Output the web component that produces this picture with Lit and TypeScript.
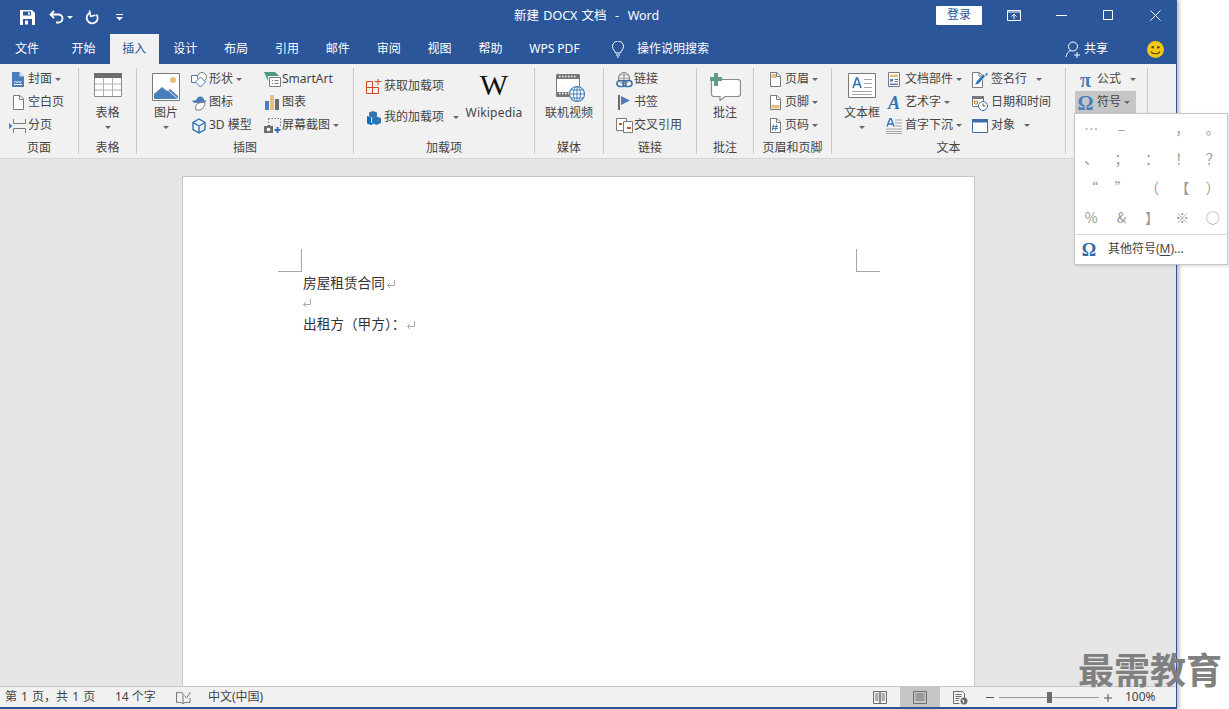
import {LitElement, css, html, svg, nothing} from 'lit';
import {customElement} from 'lit/decorators.js';

const BLUE = '#4a7ebb';
const GRAY = '#7a7a7a';
const TAN = '#e8bd7d';

const ico = (w: number, h: number, body: unknown) =>
  html`<svg width=${w} height=${h} viewBox="0 0 ${w} ${h}" fill="none">${body}</svg>`;

const page = svg`<path d="M1.500 .5h6.500l3.500 3.500v10.500h-10z" fill="#fff" stroke="${GRAY}"/><path d="M7.500 .5v4h4" stroke="${GRAY}"/>`;

const ICONS: Record<string, unknown> = {
  cover: ico(12, 15, svg`<path d="M0 0h7.500l4.500 4.500V15H0z" fill="${BLUE}"/><path d="M7.500 0v4.500H12z" fill="#cfdcec"/><path d="M2 10.500l1.500-1 1.500 1 1.500-1 1.500 1 1.500-1M2 12.500h8" stroke="#fff"/>`),
  blank: ico(12, 15, page),
  pagebreak: ico(18, 14, svg`<path d="M4.500 0v4.500h12V0M4.500 14V9.500h12V14" stroke="${GRAY}"/><path d="M0 4l3.500 3L0 10z" fill="${BLUE}"/>`),
  shapes: ico(17, 16, svg`<path d="M.5 3.500h8v7h-8z" fill="#fff" stroke="${BLUE}"/><circle cx="11" cy="5" r="4.500" fill="#fff" stroke="${GRAY}"/><path d="M9.500 5l5 5-5 5-5-5z" fill="#fff" stroke="${BLUE}"/>`),
  icons: ico(17, 16, svg`<path d="M1 6c2-1 3-1 4-.5C6 2 8 1 10 1.500c2 .5 3 2 3 3.500l3 1-3 1c-2 0-4 1-6 1C5 8 2 8 1 6z" fill="${BLUE}"/><path d="M5 15c-1-3 0-6 3-7l6-1c0 4-2 7-5 8z" fill="#fff" stroke="${GRAY}"/>`),
  cube: ico(14, 16, svg`<path d="M7 1l6 3.500v7L7 15l-6-3.500v-7zM1 4.500L7 8l6-3.500M7 8v7" stroke="#2e75b6" stroke-width="1.400"/>`),
  smartart: ico(17, 15, svg`<path d="M0 0h11l4 4H4v5z" fill="#4f9a82"/><path d="M5.500 5.500h11v9h-11z" fill="#fff" stroke="${GRAY}"/><path d="M8 8.500h1M8 11.500h1M10.500 8.500h4M10.500 11.500h4" stroke="${GRAY}"/>`),
  chart: ico(14, 15, svg`<path d="M0 6h4v9H0z" fill="${BLUE}"/><path d="M5 0h4v15H5z" fill="${TAN}"/><path d="M10 4h4v11h-4z" fill="#6d6d6d"/>`),
  shot: ico(17, 15, svg`<path d="M4.500 .5h12v8" stroke="${GRAY}" stroke-dasharray="1.500 1.500"/><path d="M4.500 .5v5" stroke="${GRAY}" stroke-dasharray="1.500 1.500"/><path d="M0 8h3l1-1h2l1 1h2v7H0z" fill="#6d6d6d"/><circle cx="4.500" cy="11.500" r="1.800" fill="#fff"/><path d="M13.500 9v6M10.500 12h6" stroke="#2e75b6" stroke-width="2"/>`),
  getaddin: ico(16, 16, svg`<path d="M.5 2.500h6v6h-6zM.5 8.500h6v6h-6zM6.500 8.500h6v6h-6z" stroke="#d24726"/><path d="M8.500 2.500h7M12 0v6" stroke="#d24726"/>`),
  myaddin: ico(15, 15, svg`<path d="M6 1l4 1.500v4L6 8 2 6.500v-4z" fill="#2e75b6"/><path d="M0 6l4 1.500v5L7 14l-3 1-4-1.500z" fill="#0f6cbd"/><path d="M5 8l4.500-1.500L14 8v5l-4.500 2L5 13z" fill="#2e75b6"/>`),
  film: ico(29, 30, svg`<path d="M.5 1.500h23v22H.5z" fill="#fff" stroke="${GRAY}"/><path d="M1 2h22v4H1zM1 19h22v4H1z" fill="#777"/><path d="M3 3.500h1.500M6 3.500h1.500M9 3.500h1.500M12 3.500h1.500M15 3.500h1.500M18 3.500h1.500M3 20.500h1.500M6 20.500h1.500M9 20.500h1.500M12 20.500h1.500" stroke="#fff" stroke-width="1.500"/><circle cx="21" cy="21" r="7.500" fill="#fff" stroke="${BLUE}" stroke-width="1.200"/><path d="M13.500 21h15M21 13.500v15M15 17h12M15 25h12" stroke="${BLUE}"/><ellipse cx="21" cy="21" rx="3.500" ry="7.500" stroke="${BLUE}"/>`),
  link: ico(17, 16, svg`<circle cx="8" cy="6" r="5.500" fill="#fff" stroke="${GRAY}"/><path d="M2.500 6h11M8 .5v11M3.500 3h9M3.500 9h9" stroke="${GRAY}" stroke-width=".8"/><rect x="1" y="8.500" width="9" height="6" rx="3" fill="none" stroke="#3a6fa8" stroke-width="1.600"/><rect x="7" y="8.500" width="9" height="6" rx="3" fill="none" stroke="#3a6fa8" stroke-width="1.600"/>`),
  bookmark: ico(14, 15, svg`<path d="M1 0h2v15H1z" fill="#6d6d6d"/><path d="M4 1l9 4.500L4 10z" fill="${BLUE}"/>`),
  xref: ico(17, 15, svg`<path d="M.5 .5h10v12H.5z" fill="#fff" stroke="${GRAY}"/><path d="M7.500 3.500h9v11h-9z" fill="#fff" stroke="${GRAY}"/><path d="M3 5h3v2H3z" fill="#d24726"/><path d="M11 9h4v2h-4z" fill="#d24726"/>`),
  comment: ico(31, 28, svg`<path d="M4 6.500h24q2.500 0 2.500 2.500v12q0 2.500-2.500 2.500H15l-5 4v-4H4q-2.500 0-2.500-2.500V9Q1.500 6.500 4 6.500z" fill="#fff" stroke="#8a8a8a" stroke-width="1.200"/><path d="M4 0h4v4h4v4H8v5H4V8H0V4h4z" fill="#5e9e84"/>`),
  header: ico(12, 15, svg`${page}<path d="M2.500 2h4.500v4H2.500z" fill="${TAN}"/>`),
  footer: ico(12, 15, svg`${page}<path d="M2.500 10h8v3.500h-8z" fill="${TAN}"/>`),
  pagenum: ico(12, 15, svg`${page}<path d="M4.500 6.500l-1 6M7.500 6.500l-1 6M3 8.500h6M3 10.500h6" stroke="${BLUE}"/>`),
  textbox: ico(28, 25, svg`<path d="M.5 .5h27v24H.5z" fill="#fff" stroke="${GRAY}"/><path d="M16 6.500h8M16 10.500h8M16 14.500h8M4 18.500h20M4 21.500h20" stroke="#a6a6a6"/><path d="M5 15l3.500-10h1L13 15M6.300 11.500h5" stroke="#2e75b6" stroke-width="1.600"/>`),
  parts: ico(12, 15, svg`<path d="M.5 .5h11v14H.5z" fill="#fff" stroke="${GRAY}"/><path d="M2 2.500h8v2.500H2z" fill="${TAN}"/><path d="M2 7h3v2.500H2z" fill="${BLUE}"/><path d="M6.500 7.500H10M6.500 9.500H10" stroke="${GRAY}"/><path d="M2 11.500h8v1.500H2z" fill="${BLUE}"/>`),
  dropcap: ico(16, 16, svg`<path d="M1 8.500L4 .5h1L8 8.500M2 6h5" stroke="#2e75b6" stroke-width="1.400"/><path d="M9 2h7M9 5h7M9 8h7M0 11h16M0 13.500h16M0 15.500h16" stroke="#a6a6a6"/>`),
  sign: ico(16, 16, svg`<path d="M.5 .5h7l3 3v12H.5z" fill="#fff" stroke="${GRAY}"/><path d="M7 .5v3.500h3.500" stroke="${GRAY}"/><path d="M3 13l1-3 7-8 2.500 2-7 8z" fill="#2e75b6" stroke="#fff" stroke-width=".5"/><path d="M13 2l2-1 1 1-1.500 2z" fill="#2e75b6"/>`),
  date: ico(16, 16, svg`<path d="M.5 2.500h11v9H.5z" fill="#fff" stroke="${GRAY}"/><path d="M0 1h12v3H0z" fill="#777"/><path d="M2.500 6h3v3h-3z" stroke="#d97a2b"/><circle cx="11" cy="11" r="4.500" fill="#fff" stroke="#2e75b6"/><path d="M11 8.500V11h2.500" stroke="#555"/>`),
  object: ico(16, 14, svg`<path d="M.5 .5h15v13H.5z" fill="#fff" stroke="#3a6fa8"/><path d="M0 0h16v3.500H0z" fill="#3a6fa8"/>`),
};

const caret = (far = false) =>
  html`<span class="caret ${far ? 'far' : ''}"></span>`;

const small = (icon: string, text: string, c: '' | 'near' | 'far' = '', cls = '') => html`
  <div class="small ${cls}">
    <span class="ic">${ICONS[icon]}</span><span>${text}</span>
    ${c ? caret(c === 'far') : nothing}
  </div>`;

const glyphSmall = (glyph: string, cls: string, text: string, c: '' | 'near' | 'far' = '', rowCls = '') => html`
  <div class="small ${rowCls}">
    <span class="ic glyph ${cls}">${glyph}</span><span>${text}</span>
    ${c ? caret(c === 'far') : nothing}
  </div>`;

const large = (icon: unknown, text: string, drop = false) => html`
  <div class="large">
    <div class="large-ic">${icon}</div>
    <div class="large-text">${text}</div>
    ${drop ? html`<span class="caret drop"></span>` : nothing}
  </div>`;

const TABLE_ICON = ico(28, 24, svg`<path d="M.5 .5h27v23H.5z" fill="#fff" stroke="#8a8a8a"/><path d="M0 0h28v5H0z" fill="#6d6d6d"/><path d="M1 11h26M1 17h26M9.500 5v18M18.500 5v18" stroke="#b0b0b0"/>`);
const PICTURE_ICON = ico(28, 28, svg`<path d="M.5 .5h27v27H.5z" fill="#fff" stroke="#7a7a7a"/><circle cx="21" cy="7" r="3" fill="${TAN}"/><path d="M2 26V21l8-7 5 4 3-2 8 7v3z" fill="${BLUE}"/><path d="M2 19l8-7 16 14" stroke="#fff" stroke-width=".8"/>`);

const TABS = ['开始', '插入', '设计', '布局', '引用', '邮件', '审阅', '视图', '帮助', 'WPS PDF'];
const SYMBOLS = ['…', '–', '', '，', '。', '、', '；', '：', '！', '？',
  '“', '”', '（', '【', '）', '%', '&', '】', '※', '○'];

@customElement('app-root')
export class AppRoot extends LitElement {
  static styles = css`
    :host {
      display: block;
      position: relative;
      width: 1229px;
      height: 709px;
      overflow: hidden;
      background: #fff;
      font: 12px/1.2 "Noto Sans", "Noto Sans CJK SC", sans-serif;
      color: #444;
    }
    .window {
      width: 1176px;
      height: 709px;
      display: flex;
      flex-direction: column;
      border-right: 1px solid #2b579a;
      box-shadow: 2px 0 4px rgba(0, 0, 0, .3);
    }
    .titlebar {
      height: 34px;
      flex: none;
      background: #2b579a;
      color: #fff;
      display: flex;
      align-items: center;
    }
    .qat {
      width: 514px;
      flex: none;
      display: flex;
      align-items: center;
      padding-left: 20px;
      box-sizing: border-box;
      height: 32px;
    }
    .qat svg { display: block; }
    .gap-a { width: 14px; }
    .gap-b { width: 11px; }
    .gap-c { width: 17px; }
    .qat .caret { border-top-color: #fff; }
    .title { font-size: 12.500px; width: 422px; flex: none; word-spacing: 1px; padding-bottom: 4px; }
    .login {
      width: 46px;
      height: 19px;
      flex: none;
      margin-bottom: 4px;
      background: #fff;
      color: #2b579a;
      border-radius: 1px;
      display: flex;
      align-items: center;
      justify-content: center;
    }
    .winbtns { display: flex; align-items: center; padding-bottom: 4px; }
    .winbtns svg { display: block; }
    .gap-d { width: 25px; }
    .gap-e { width: 35px; }
    .gap-f { width: 36px; }
    .gap-g { width: 37px; }

    .tabs {
      height: 30px;
      flex: none;
      background: #2b579a;
      color: #fff;
      display: flex;
      align-items: stretch;
    }
    .tab {
      display: flex;
      align-items: center;
      justify-content: center;
      padding: 0 12.500px;
      margin-right: 1.850px;
    }
    .tab.file { width: 54px; padding: 0; margin-right: 5px; }
    .tab.on { background: #f1f1f1; color: #2b579a; }
    .tell { display: flex; align-items: center; margin-left: 18px; gap: 13px; width: 453px; }
    .share { display: flex; align-items: center; gap: 2px; width: 82px; }
    .smile { display: flex; align-items: center; }

    .ribbon {
      height: 90px;
      flex: none;
      padding-top: 4px;
      background: #f1f1f1;
      border-bottom: 1px solid #d4d4d4;
      display: flex;
      align-items: flex-start;
    }
    .group {
      height: 86px;
      box-sizing: border-box;
      flex: none;
      border-right: 1px solid #c6c6c6;
      display: flex;
      flex-direction: column;
    }
    .body { flex: 1; display: grid; justify-content: start; }
    .label { height: 20px; text-align: center; line-height: 20px; margin-bottom: -4px; }
    .col { display: flex; flex-direction: column; }
    .small { height: 23px; display: flex; align-items: center; white-space: nowrap; }
    .ic { width: 18px; margin-right: 1px; flex: none; display: flex; align-items: center; justify-content: center; }
    .ic svg { display: block; }
    .caret {
      width: 0;
      height: 0;
      margin-left: 3px;
      border-top: 3px solid #666;
      border-left: 3px solid transparent;
      border-right: 3px solid transparent;
      flex: none;
    }
    .caret.far { margin-left: 9px; }
    .caret.drop { margin: 5px 0 0; }
    .large { display: flex; flex-direction: column; align-items: center; white-space: nowrap; padding-top: 5px; }
    .large-ic { height: 31px; display: flex; align-items: flex-start; justify-content: center; }
    .large-ic svg { display: block; }
    .large-text { line-height: 16px; margin-top: 1px; }
    .glyph { font-family: "Liberation Serif", serif; font-weight: bold; color: #4a7ebb; line-height: 1; }
    .glyph.sym { font-size: 20px; }
    .glyph.art { font-size: 18px; font-style: italic; color: #2e75b6; }
    .wiki { font: 30px/1 "Liberation Serif", serif; color: #111; margin-top: -3px; }

    .g-page { width: 79px; padding-left: 9px; }
    .g-table { width: 58px; }
    .g-table .body, .g-media .body, .g-note .body { justify-content: stretch; }
    .g-pic { width: 217px; padding-left: 15px; }
    .g-pic .body { grid-template-columns: 28px 65px auto; column-gap: 10px; }
    .g-pic .col + .col { margin-left: -2px; }
    .g-pic .label { margin-left: -15px; }
    .g-add { width: 181px; padding-left: 11px; }
    .g-add .body { grid-template-columns: 98px 60px; column-gap: 1px; }
    .g-add .large-text { letter-spacing: .2px; }
    .g-add .label { margin-left: -11px; }
    .g-add .col { padding-top: 7px; gap: 8px; }
    .g-media { width: 69px; }
    .g-media .large-ic { padding-left: 2px; }
    .g-link { width: 93px; padding-left: 11px; }
    .g-link .label { margin-left: -11px; }
    .g-note { width: 57px; }
    .g-head { width: 78px; padding-left: 12px; }
    .g-head .label { margin-left: -12px; }
    .g-text { width: 234px; padding-left: 12px; }
    .g-text .body { grid-template-columns: 36px 81px auto; column-gap: 5px; }
    .g-text .ic { margin-right: 2px; }
    .g-text .label { margin-left: -12px; }
    .g-sym { width: 82px; padding-left: 9px; }
    .g-sym .ic { width: 21px; }
    .g-sym .col { width: 61px; }
    .g-page .label { margin-left: -9px; }
    .hot { background: #c6c6c6; }

    .doc {
      flex: 1;
      min-height: 0;
      background: #e6e6e6;
      padding: 17px 0 0 182px;
      overflow: hidden;
    }
    .sheet {
      width: 793px;
      height: 560px;
      box-sizing: border-box;
      background: #fff;
      border: 1px solid #c6c6c6;
      padding: 72px 94px 0 95px;
      font-size: 13.670px;
      color: #333;
    }
    .marks { display: flex; justify-content: space-between; margin-bottom: 1px; }
    .mark { width: 24px; height: 23px; box-sizing: border-box; border-bottom: 1px solid #a6a6a6; }
    .mark.l { border-right: 1px solid #a6a6a6; }
    .mark.r { border-left: 1px solid #a6a6a6; }
    .line { height: 21px; margin-left: 25px; display: flex; align-items: center; white-space: nowrap; }
    .line svg { margin-left: 1px; }
    .line.bare { height: 20px; }
    .line.bare svg { margin-left: -1px; margin-top: -2px; }

    .status {
      height: 20px;
      flex: none;
      box-sizing: content-box;
      background: #f1f1f1;
      border-top: 1px solid #c6c6c6;
      border-bottom: 2px solid #2b579a;
      display: flex;
      align-items: stretch;
      color: #444;
    }
    .st { display: flex; align-items: center; padding-top: 1px; flex: none; box-sizing: border-box; }
    .st-page { width: 115px; padding-left: 5px; word-spacing: 1px; }
    .st-words { width: 61px; }
    .st-proof { width: 32px; }
    .st-lang { width: 665px; }
    .st-read { width: 27px; }
    .st-web { width: 46px; padding-left: 13px; }
    .st-pct { margin-left: 13px; }
    .view { display: flex; align-items: center; justify-content: center; width: 40px; }
    .view.on { background: #c6c6c6; }
    .slider { width: 100px; height: 1px; background: #9a9a9a; margin: 0 5px; display: flex; justify-content: center; align-items: center; }
    .thumb { width: 5px; height: 11px; background: #6d6d6d; flex: none; }

    .menu {
      position: absolute;
      left: 1074px;
      top: 113px;
      width: 154px;
      height: 152px;
      box-sizing: border-box;
      background: #fff;
      border: 1px solid #c6c6c6;
      box-shadow: 1px 1px 3px rgba(0, 0, 0, .15);
      display: flex;
      flex-direction: column;
    }
    .symbols {
      display: grid;
      grid-template-columns: repeat(5, 30.400px);
      grid-auto-rows: 29.500px;
      height: 121px;
      box-sizing: border-box;
      border-bottom: 1px solid #d8d8d8;
      margin: 0 1px;
      font: 14px/29px "Noto Sans CJK SC", sans-serif;
      color: #999;
      text-align: center;
    }
    .more { flex: 1; display: flex; align-items: center; color: #444; }
    .more .glyph { width: 28px; margin-right: 5px; text-align: center; font-size: 18px; color: #2e6ca8; }
    .more u { text-underline-offset: 2px; }

    .watermark {
      position: absolute;
      left: 1078px;
      top: 650px;
      font: bold 36px/36px "Noto Sans CJK SC", sans-serif;
      color: #808080;
      white-space: nowrap;
    }
  `;

  private ret() {
    return ico(10, 10, svg`<path d="M8.500 1v5.500H1.500M4 4L1.500 6.500 4 9" stroke="#aaa"/>`);
  }

  private titlebar() {
    return html`
      <div class="titlebar">
        <div class="qat">
          ${ico(15, 15, svg`<path d="M0 0h12l3 3v12H0z" fill="#fff"/><path d="M3 1.500h8v4H3zM3 9h9v6H3z" fill="#2b579a"/><path d="M8 2.500h2v2H8zM5 10.500h3v4H5z" fill="#fff"/>`)}
          <span class="gap-a"></span>
          ${ico(15, 14, svg`<path d="M5 1L1.500 4.500 5 8M2 4.500h7.500a4 4 0 0 1 0 8H7" stroke="#fff" stroke-width="1.800"/>`)}
          <span class="caret"></span>
          <span class="gap-b"></span>
          ${ico(15, 15, svg`<path d="M6.500 2.700a5.500 5.500 0 1 0 6 1.800" stroke="#fff" stroke-width="1.800"/><path d="M6 0v6h5" stroke="#fff" stroke-width="1.500" transform="rotate(-12 8 3)"/>`)}
          <span class="gap-c"></span>
          ${ico(7, 7, svg`<path d="M0 .5h7" stroke="#fff"/><path d="M0 3h7L3.500 6.500z" fill="#fff"/>`)}
        </div>
        <div class="title">新建 DOCX 文档 &nbsp;-&nbsp; Word</div>
        <div class="login">登录</div>
        <div class="winbtns">
          <span class="gap-d"></span>
          ${ico(14, 11, svg`<path d="M.5 .5h13v10H.5z" stroke="#fff"/><path d="M1 2h12" stroke="#fff"/><path d="M7 9V4.500M4.500 6.500L7 4l2.500 2.500" stroke="#fff"/>`)}
          <span class="gap-e"></span>
          ${ico(11, 1, svg`<path d="M0 .5h11" stroke="#fff"/>`)}
          <span class="gap-f"></span>
          ${ico(10, 10, svg`<path d="M.5 .5h9v9h-9z" stroke="#fff"/>`)}
          <span class="gap-g"></span>
          ${ico(11, 11, svg`<path d="M.5 .5l10 10M10.500 .5l-10 10" stroke="#fff"/>`)}
        </div>
      </div>`;
  }

  private tabs() {
    return html`
      <div class="tabs">
        <div class="tab file">文件</div>
        ${TABS.map(t => html`<div class="tab ${t === '插入' ? 'on' : ''}">${t}</div>`)}
        <div class="tell">
          ${ico(12, 17, svg`<path d="M3.500 12C3 9.500.5 8.500.5 5.500a5.500 5.500 0 0 1 11 0c0 3-2.500 4-3 6.500zM4 14h4M5 16h2" stroke="#fff"/>`)}
          <span>操作说明搜索</span>
        </div>
        <div class="share">
          ${ico(17, 17, svg`<circle cx="8" cy="5.500" r="4.500" stroke="#fff"/><path d="M1 16c.5-3.500 2.500-6 5-6.500M12 11v6M9 14h6" stroke="#fff"/>`)}
          <span>共享</span>
        </div>
        <div class="smile">
          ${ico(17, 17, svg`<circle cx="8.500" cy="8.500" r="8.500" fill="#f2c811"/><circle cx="5.700" cy="6.300" r="1.300" fill="#5a4a10"/><circle cx="11.300" cy="6.300" r="1.300" fill="#5a4a10"/><path d="M4 10.500c1.500 3 7.500 3 9 0" stroke="#5a4a10" stroke-width="1.200"/>`)}
        </div>
      </div>`;
  }

  private ribbon() {
    return html`
      <div class="ribbon">
        <div class="group g-page">
          <div class="body"><div class="col">
            ${small('cover', '封面', 'near')}
            ${small('blank', '空白页')}
            ${small('pagebreak', '分页')}
          </div></div>
          <div class="label">页面</div>
        </div>
        <div class="group g-table">
          <div class="body">${large(TABLE_ICON, '表格', true)}</div>
          <div class="label">表格</div>
        </div>
        <div class="group g-pic">
          <div class="body">
            ${large(PICTURE_ICON, '图片', true)}
            <div class="col">
              ${small('shapes', '形状', 'near')}
              ${small('icons', '图标')}
              ${small('cube', '3D 模型')}
            </div>
            <div class="col">
              ${small('smartart', 'SmartArt')}
              ${small('chart', '图表')}
              ${small('shot', '屏幕截图', 'near')}
            </div>
          </div>
          <div class="label">插图</div>
        </div>
        <div class="group g-add">
          <div class="body">
            <div class="col">
              ${small('getaddin', '获取加载项')}
              ${small('myaddin', '我的加载项', 'far')}
            </div>
            ${large(html`<span class="wiki">W</span>`, 'Wikipedia')}
          </div>
          <div class="label">加载项</div>
        </div>
        <div class="group g-media">
          <div class="body">${large(ICONS.film, '联机视频')}</div>
          <div class="label">媒体</div>
        </div>
        <div class="group g-link">
          <div class="body"><div class="col">
            ${small('link', '链接')}
            ${small('bookmark', '书签')}
            ${small('xref', '交叉引用')}
          </div></div>
          <div class="label">链接</div>
        </div>
        <div class="group g-note">
          <div class="body">${large(ICONS.comment, '批注')}</div>
          <div class="label">批注</div>
        </div>
        <div class="group g-head">
          <div class="body"><div class="col">
            ${small('header', '页眉', 'near')}
            ${small('footer', '页脚', 'near')}
            ${small('pagenum', '页码', 'near')}
          </div></div>
          <div class="label">页眉和页脚</div>
        </div>
        <div class="group g-text">
          <div class="body">
            ${large(ICONS.textbox, '文本框', true)}
            <div class="col">
              ${small('parts', '文档部件', 'near')}
              ${glyphSmall('A', 'art', '艺术字', 'near')}
              ${small('dropcap', '首字下沉', 'near')}
            </div>
            <div class="col">
              ${small('sign', '签名行', 'far')}
              ${small('date', '日期和时间')}
              ${small('object', '对象', 'far')}
            </div>
          </div>
          <div class="label">文本</div>
        </div>
        <div class="group g-sym">
          <div class="body"><div class="col">
            ${glyphSmall('π', 'sym', '公式', 'far')}
            ${glyphSmall('Ω', 'sym', '符号', 'near', 'hot')}
          </div></div>
        </div>
      </div>`;
  }

  private statusbar() {
    return html`
      <div class="status">
        <div class="st st-page">第 1 页，共 1 页</div>
        <div class="st st-words">14 个字</div>
        <div class="st st-proof">
          ${ico(15, 13, svg`<path d="M7 2.500C6 1.500 3 1 .5 1.500v10c2.500-.5 5 0 6.500 1 1.500-1 4-1.500 7-1V7M7 2.500v10" stroke="#777"/><path d="M8.500 4.500l2 2.500 4-6" stroke="#777"/>`)}
        </div>
        <div class="st st-lang">中文(中国)</div>
        <div class="st st-read">
          ${ico(14, 13, svg`<path d="M.5 .5h6.500v12H.5zM7 .5h6.500v12H7z" stroke="#6d6d6d"/><path d="M2 3h3.500M2 5h3.500M2 7h3.500M2 9h3.500M8.500 3H12M8.500 5H12M8.500 7H12M8.500 9H12" stroke="#6d6d6d"/>`)}
        </div>
        <div class="view on">
          ${ico(14, 13, svg`<path d="M.5 .5h13v12H.5z" stroke="#6d6d6d"/><path d="M2.500 3h9M2.500 5h9M2.500 7h9M2.500 9h9" stroke="#6d6d6d"/>`)}
        </div>
        <div class="st st-web">
          ${ico(15, 14, svg`<path d="M.5 .5h9l2 2v5M.5 .5v12h6" stroke="#6d6d6d"/><path d="M2.500 3.500h6M2.500 5.500h6M2.500 7.500h4M2.500 9.500h3" stroke="#6d6d6d"/><circle cx="11" cy="10" r="3.500" fill="#6d6d6d"/><path d="M9 9l2 1-1 2" stroke="#fff"/>`)}
        </div>
        <div class="st">
          ${ico(8, 1, svg`<path d="M0 .5h8" stroke="#555"/>`)}
          <div class="slider"><div class="thumb"></div></div>
          ${ico(8, 8, svg`<path d="M0 4h8M4 0v8" stroke="#555"/>`)}
        </div>
        <div class="st st-pct">100%</div>
      </div>`;
  }

  render() {
    return html`
      <div class="window">
        ${this.titlebar()}
        ${this.tabs()}
        ${this.ribbon()}
        <div class="doc">
          <div class="sheet">
            <div class="marks"><div class="mark l"></div><div class="mark r"></div></div>
            <div class="line">房屋租赁合同${this.ret()}</div>
            <div class="line bare">${this.ret()}</div>
            <div class="line">出租方（甲方）：${this.ret()}</div>
          </div>
        </div>
        ${this.statusbar()}
      </div>
      <div class="menu">
        <div class="symbols">${SYMBOLS.map(s => html`<span>${s}</span>`)}</div>
        <div class="more">
          <span class="glyph">Ω</span><span>其他符号(<u>M</u>)...</span>
        </div>
      </div>
      <div class="watermark">最需教育</div>`;
  }
}
